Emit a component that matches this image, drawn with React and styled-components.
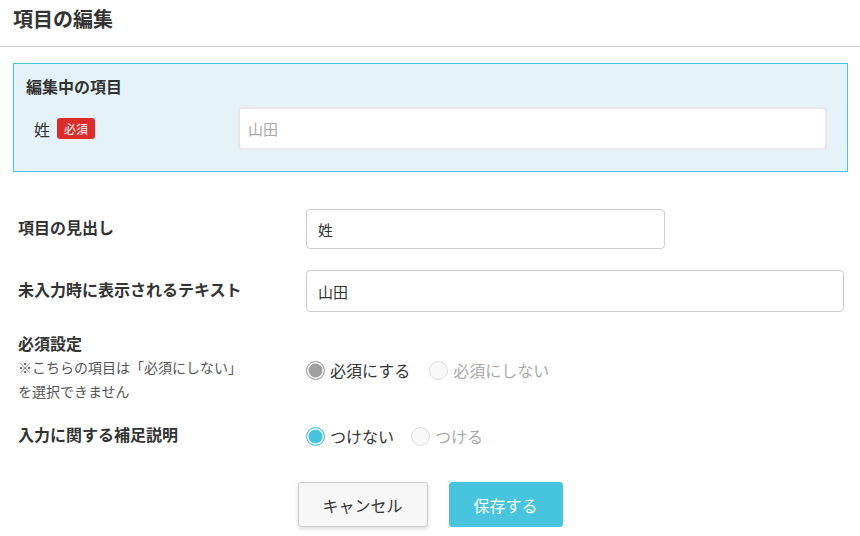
import React from 'react'
import styled, { createGlobalStyle } from 'styled-components'

const GlobalStyle = createGlobalStyle`
  * { box-sizing: border-box; }
  body {
    margin: 0;
    background: #fff;
    color: #333;
    font-family: "Noto Sans CJK JP", "Noto Sans", sans-serif;
  }
`

const Page = styled.div`
  width: 860px;
  height: 536px;
  overflow: hidden;
`

const Header = styled.header`
  height: 47px;
  padding: 0 13px;
  display: flex;
  align-items: center;
  border-bottom: 1px solid #cfcfcf;
`

const Title = styled.h1`
  margin: 0 0 10px;
  font-size: 20px;
  font-weight: 700;
  color: #333;
`

const Panel = styled.section`
  margin: 16px 12px 0 13px;
  padding: 10px 20px 21px 12px;
  background: #e5f2f7;
  border: 1px solid #48c6df;
`

const PanelTitle = styled.h2`
  margin: 0 0 9px;
  font-size: 16px;
  font-weight: 700;
  line-height: 24px;
  color: #333;
`

const PreviewRow = styled.div`
  display: flex;
  align-items: center;
`

const PreviewLabel = styled.div`
  width: 212px;
  padding-left: 8px;
  display: flex;
  align-items: center;
  gap: 7px;
  font-size: 16px;
  color: #333;
`

const Badge = styled.span`
  display: inline-block;
  padding: 0 7px;
  height: 21px;
  line-height: 21px;
  border-radius: 3px;
  background: #dc2b2b;
  color: #fff;
  font-size: 12px;
`

const PreviewInput = styled.div`
  flex: 1;
  height: 43px;
  padding: 0 8px;
  display: flex;
  align-items: center;
  background: #fff;
  border: 2px solid #e6e8ea;
  border-radius: 4px;
  color: #aaa;
  font-size: 15px;
`

const Form = styled.div`
  padding: 37px 16px 0 18px;
`

const Row = styled.div`
  display: flex;
  align-items: center;
  margin-bottom: ${p => p.$gap ?? 21}px;
`

const Label = styled.div`
  width: 288px;
  flex-shrink: 0;
  padding-bottom: 4px;
`

const LabelText = styled.div`
  font-size: 16px;
  font-weight: 700;
  line-height: 20px;
  color: #333;
`

const Note = styled.div`
  margin-top: 2px;
  font-size: 14px;
  line-height: 24px;
  color: #555;
`

const Field = styled.div`
  width: ${p => p.$width ? `${p.$width}px` : 'auto'};
  flex: ${p => p.$width ? 'none' : '1'};
  height: ${p => p.$height ?? 40}px;
  padding: 0 11px;
  display: flex;
  align-items: center;
  border: 1px solid #cccccc;
  border-radius: 4px;
  background: #fff;
  font-size: 15px;
  color: #333;
`

const RadioGroup = styled.div`
  display: flex;
  align-items: center;
  gap: ${p => p.$gap ?? 20}px;
`

const RadioItem = styled.label`
  display: flex;
  align-items: center;
  gap: 5px;
  font-size: 16px;
  color: ${p => p.$disabled ? '#aaa' : '#333'};
`

const Dot = styled.span`
  width: 19px;
  height: 19px;
  border-radius: 50%;
  border: 1.5px solid ${p => p.$disabled ? '#dddddd' : p.$color};
  background: ${p => p.$disabled ? '#f8f8f8' : p.$color};
  box-shadow: ${p => p.$disabled ? 'none' : 'inset 0 0 0 1.5px #fff'};
`

const Actions = styled.div`
  display: flex;
  justify-content: center;
  gap: 21px;
  padding-right: 2px;
  margin-top: 34px;
`

const Button = styled.button`
  height: 45px;
  width: ${p => p.$width}px;
  border-radius: 3px;
  font-family: inherit;
  font-size: 16px;
  border: 1px solid ${p => p.$primary ? '#48c4de' : '#cccccc'};
  background: ${p => p.$primary ? '#48c4de' : '#f7f7f7'};
  color: ${p => p.$primary ? '#fff' : '#333'};
  box-shadow: ${p => p.$primary ? 'none' : '0 2px 4px rgba(0,0,0,0.15)'};
`

const Radio = ({ label, checked, disabled, color }) => (
  <RadioItem $disabled={disabled}>
    <Dot $disabled={!checked} $color={color} />
    {label}
  </RadioItem>
)

export default function App() {
  return (
    <Page>
      <GlobalStyle />
      <Header>
        <Title>項目の編集</Title>
      </Header>

      <Panel>
        <PanelTitle>編集中の項目</PanelTitle>
        <PreviewRow>
          <PreviewLabel>
            姓<Badge>必須</Badge>
          </PreviewLabel>
          <PreviewInput>山田</PreviewInput>
        </PreviewRow>
      </Panel>

      <Form>
        <Row>
          <Label><LabelText>項目の見出し</LabelText></Label>
          <Field $width={359}>姓</Field>
        </Row>
        <Row $gap={21}>
          <Label><LabelText>未入力時に表示されるテキスト</LabelText></Label>
          <Field $height={42}>山田</Field>
        </Row>
        <Row $gap={17}>
          <Label>
            <LabelText>必須設定</LabelText>
            <Note>※こちらの項目は「必須にしない」<br />を選択できません</Note>
          </Label>
          <RadioGroup $gap={19}>
            <Radio label="必須にする" checked color="#a0a0a0" />
            <Radio label="必須にしない" disabled color="#a0a0a0" />
          </RadioGroup>
        </Row>
        <Row $gap={0}>
          <Label><LabelText>入力に関する補足説明</LabelText></Label>
          <RadioGroup $gap={17}>
            <Radio label="つけない" checked color="#48c4de" />
            <Radio label="つける" disabled color="#48c4de" />
          </RadioGroup>
        </Row>
        <Actions>
          <Button $width={130}>キャンセル</Button>
          <Button $width={114} $primary>保存する</Button>
        </Actions>
      </Form>
    </Page>
  )
}
